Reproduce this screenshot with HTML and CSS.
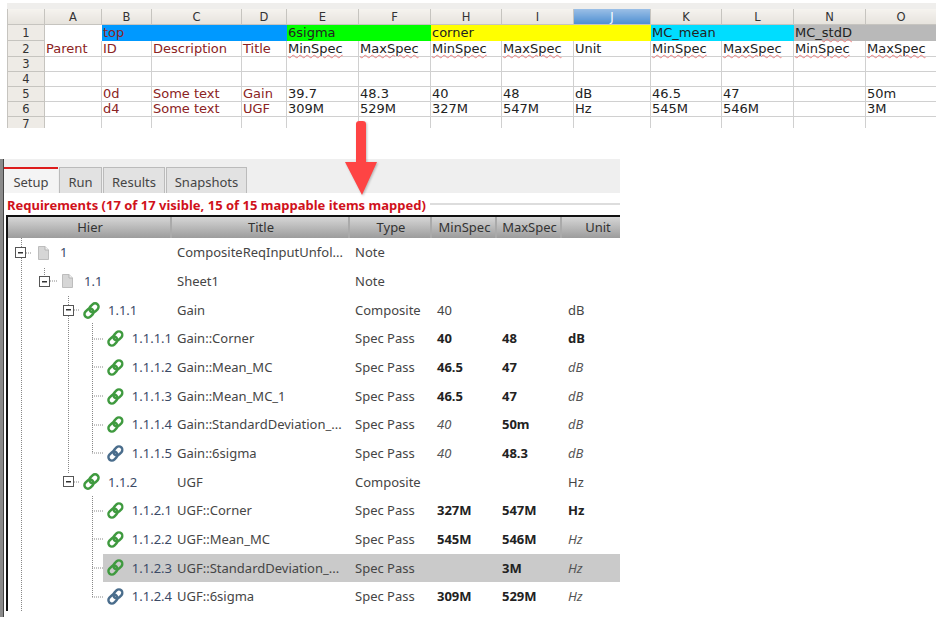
FILE: index.html
```html
<!DOCTYPE html>
<html lang="en">

<head>
    <meta charset="UTF-8">
    <meta name="viewport" content="width=device-width, initial-scale=1.0">
    <title>Requirements</title>
    <link rel="stylesheet" href="styles.css">
</head>

<body>
    <svg class="defs" width="0" height="0">
        <symbol id="link" viewBox="0 0 17 17">
            <rect x="1" y="7.6" width="10" height="7" rx="3.5" transform="rotate(-45 6 11.1)" fill="none" stroke="currentColor" stroke-width="2.5"/>
            <rect x="6" y="2.4" width="10" height="7" rx="3.5" transform="rotate(-45 11 5.9)" fill="none" stroke="currentColor" stroke-width="2.5"/>
        </symbol>
        <symbol id="doc" viewBox="0 0 11 14">
            <path d="M.5.5H7L10.5 4V13.5H.5Z" fill="#d6d6d6" stroke="#bdbdbd"/>
            <path d="M7 .5V4H10.5" fill="#f2f2f2" stroke="#b4b4b4"/>
        </symbol>
    </svg>

    <div class="sheet">
        <table class="grid">
            <colgroup>
                <col class="c-head"><col class="c-a"><col class="c-b"><col class="c-c"><col class="c-d">
                <col class="c-n"><col class="c-n"><col class="c-s"><col class="c-n"><col class="c-j">
                <col class="c-s"><col class="c-n"><col class="c-n"><col class="c-s">
            </colgroup>
            <tr class="col-heads">
                <th></th><th>A</th><th>B</th><th>C</th><th>D</th><th>E</th><th>F</th><th>H</th><th>I</th><th class="picked">J</th><th>K</th><th>L</th><th>N</th><th>O</th>
            </tr>
            <tr class="r1">
                <th>1</th><td></td>
                <td colspan="3" class="blue red">top</td>
                <td colspan="2" class="green">6sigma</td>
                <td colspan="3" class="yellow">corner</td>
                <td colspan="2" class="cyan">MC_mean</td>
                <td colspan="2" class="grey">MC_<span class="spell">stdD</span></td>
            </tr>
            <tr class="r2">
                <th>2</th><td class="red">Parent</td><td class="red">ID</td><td class="red">Description</td><td class="red">Title</td>
                <td><span class="spell">MinSpec</span></td><td><span class="spell">MaxSpec</span></td><td><span class="spell">MinSpec</span></td><td class="dark-l"><span class="spell">MaxSpec</span></td><td>Unit</td>
                <td><span class="spell">MinSpec</span></td><td><span class="spell">MaxSpec</span></td><td><span class="spell">MinSpec</span></td><td><span class="spell">MaxSpec</span></td>
            </tr>
            <tr class="r3">
                <th>3</th><td></td><td></td><td></td><td></td><td></td><td></td><td></td><td class="dark-l"></td><td></td><td></td><td></td><td></td><td></td>
            </tr>
            <tr class="r4">
                <th>4</th><td></td><td></td><td></td><td></td><td></td><td></td><td></td><td class="dark-l"></td><td></td><td></td><td></td><td></td><td></td>
            </tr>
            <tr class="r5">
                <th>5</th><td></td><td class="red">0d</td><td class="red">Some text</td><td class="red">Gain</td>
                <td>39.7</td><td>48.3</td><td>40</td><td class="dark-l">48</td><td>dB</td><td>46.5</td><td>47</td><td></td><td>50m</td>
            </tr>
            <tr class="r6">
                <th>6</th><td></td><td class="red">d4</td><td class="red">Some text</td><td class="red">UGF</td>
                <td>309M</td><td>529M</td><td>327M</td><td class="dark-l">547M</td><td>Hz</td><td>545M</td><td>546M</td><td></td><td>3M</td>
            </tr>
            <tr class="r7">
                <th>7</th><td></td><td></td><td></td><td></td><td></td><td></td><td></td><td class="dark-l"></td><td></td><td></td><td></td><td></td><td></td>
            </tr>
        </table>
    </div>

    <svg class="arrow" width="40" height="80" viewBox="0 0 40 80">
        <path d="M13 4Q13 1 16.5 1H19.5Q23 1 23 4V42H34L19 75L2 42H13Z" fill="#fe4444"/>
    </svg>

    <div class="panel">
        <div class="tabs">
            <div class="tab active">Setup</div>
            <div class="tab t-run">Run</div>
            <div class="tab t-results">Results</div>
            <div class="tab t-snap">Snapshots</div>
        </div>
        <div class="title-row">
            <span class="req-title">Requirements (17 of 17 visible, 15 of 15 mappable items mapped)</span>
            <span class="title-rule"></span>
        </div>
        <div class="tree">
            <div class="tree-head row-cols">
                <div>Hier</div><div>Title</div><div>Type</div><div>MinSpec</div><div>MaxSpec</div><div>Unit</div>
            </div>
            <div class="tree-body">
                <!-- coords: page x - 8, page y - 238 -->
                <svg class="lines" width="612" height="379">
                    <path d="M13.5 0V379M36.5 30V37M60.5 58V235M84.5 85V215M84.5 258V359"/>
                    <path d="M18 15H24M42 43H49M66 72H72M66 244H72M84 101H95M84 129H95M84 158H95M84 187H95M84 215H95M84 273H95M84 301H95M84 330H95M84 359H95"/>
                </svg>
                <div class="row row-cols">
                    <div class="hier lvl1"><span class="box"></span><svg class="doc"><use href="#doc"/></svg><span>1</span></div>
                    <div>CompositeReqInputUnfol...</div><div>Note</div><div></div><div></div><div></div>
                </div>
                <div class="row row-cols">
                    <div class="hier lvl2"><span class="box"></span><svg class="doc"><use href="#doc"/></svg><span>1.1</span></div>
                    <div>Sheet1</div><div>Note</div><div></div><div></div><div></div>
                </div>
                <div class="row row-cols">
                    <div class="hier lvl3"><span class="box"></span><svg class="link"><use href="#link"/></svg><span>1.1.1</span></div>
                    <div>Gain</div><div>Composite</div><div>40</div><div></div><div>dB</div>
                </div>
                <div class="row row-cols">
                    <div class="hier leaf"><svg class="link"><use href="#link"/></svg><span>1.1.1.1</span></div>
                    <div>Gain::Corner</div><div>Spec Pass</div><div class="b">40</div><div class="b">48</div><div class="b">dB</div>
                </div>
                <div class="row row-cols">
                    <div class="hier leaf"><svg class="link"><use href="#link"/></svg><span>1.1.1.2</span></div>
                    <div>Gain::Mean_MC</div><div>Spec Pass</div><div class="b">46.5</div><div class="b">47</div><div class="i">dB</div>
                </div>
                <div class="row row-cols">
                    <div class="hier leaf"><svg class="link"><use href="#link"/></svg><span>1.1.1.3</span></div>
                    <div>Gain::Mean_MC_1</div><div>Spec Pass</div><div class="b">46.5</div><div class="b">47</div><div class="i">dB</div>
                </div>
                <div class="row row-cols">
                    <div class="hier leaf"><svg class="link"><use href="#link"/></svg><span>1.1.1.4</span></div>
                    <div>Gain::StandardDeviation_...</div><div>Spec Pass</div><div class="i">40</div><div class="b">50m</div><div class="i">dB</div>
                </div>
                <div class="row row-cols">
                    <div class="hier leaf"><svg class="link slate"><use href="#link"/></svg><span>1.1.1.5</span></div>
                    <div>Gain::6sigma</div><div>Spec Pass</div><div class="i">40</div><div class="b">48.3</div><div class="i">dB</div>
                </div>
                <div class="row row-cols">
                    <div class="hier lvl3"><span class="box"></span><svg class="link"><use href="#link"/></svg><span>1.1.2</span></div>
                    <div>UGF</div><div>Composite</div><div></div><div></div><div>Hz</div>
                </div>
                <div class="row row-cols">
                    <div class="hier leaf"><svg class="link"><use href="#link"/></svg><span>1.1.2.1</span></div>
                    <div>UGF::Corner</div><div>Spec Pass</div><div class="b">327M</div><div class="b">547M</div><div class="b">Hz</div>
                </div>
                <div class="row row-cols">
                    <div class="hier leaf"><svg class="link"><use href="#link"/></svg><span>1.1.2.2</span></div>
                    <div>UGF::Mean_MC</div><div>Spec Pass</div><div class="b">545M</div><div class="b">546M</div><div class="i">Hz</div>
                </div>
                <div class="row row-cols selected">
                    <div class="hier leaf"><svg class="link"><use href="#link"/></svg><span>1.1.2.3</span></div>
                    <div>UGF::StandardDeviation_...</div><div>Spec Pass</div><div></div><div class="b">3M</div><div class="i">Hz</div>
                </div>
                <div class="row row-cols">
                    <div class="hier leaf"><svg class="link slate"><use href="#link"/></svg><span>1.1.2.4</span></div>
                    <div>UGF::6sigma</div><div>Spec Pass</div><div class="b">309M</div><div class="b">529M</div><div class="i">Hz</div>
                </div>
            </div>
        </div>
    </div>
</body>

</html>
```
FILE: styles.css
```css
/* General */
html,
body {
    margin: 0;
    padding: 0;
    height: 617px;
    overflow: hidden;
    background-color: #fff;
}

.defs {
    display: block;
    height: 0;
}

/* Spreadsheet */
.sheet {
    margin-left: 7px;
    padding-top: 3px;
    height: 125px;
    overflow: hidden;
}

.grid {
    table-layout: fixed;
    width: 929px;
    border-collapse: collapse;
    border-top: 6px solid #efeeec;
    font-family: "DejaVu Sans", sans-serif;
    font-size: 13px;
    color: #222;
}

.c-head { width: 37px; }
.c-a { width: 57px; }
.c-b { width: 50px; }
.c-c { width: 90px; }
.c-d { width: 45px; }
.c-n { width: 72px; }
.c-s { width: 71px; }
.c-j { width: 77px; }

.grid th {
    background: #eeebe6;
    border: 1px solid #c6c4bf;
    font-weight: normal;
    font-size: 11.5px;
    color: #333;
    padding: 0;
    text-align: center;
}

.grid td {
    border: 1px solid #d0d0d0;
    padding: 0 0 0 1px;
    white-space: nowrap;
    overflow: hidden;
    vertical-align: middle;
    line-height: 14px;
}

.grid .dark-l {
    border-left-color: #a8a8a8;
}

.col-heads th {
    height: 15px;
    background: linear-gradient(#f5f3ef, #e6e3dd);
}

.grid .picked {
    background: linear-gradient(#9bbfe6, #4f8fd2);
    color: #fff;
}

.r1 { height: 16px; }
.r2 { height: 16px; }
.r3, .r4, .r5, .r6, .r7 { height: 15px; }

.grid .r1 td,
.grid .r2 td {
    line-height: 15px;
    overflow: visible;
}

.r1 td {
    border-color: transparent;
}

.grid .red { color: #8b2323; }
.blue { background: #0099ff; }
.green { background: #00ff00; }
.yellow { background: #ffff00; }
.cyan { background: #00ddff; }
.grey { background: #b9b9b9; }

.spell {
    text-decoration: underline wavy #ee7f7f 1px;
    text-underline-offset: 1px;
}

/* Arrow over the panel */
.arrow {
    position: absolute;
    left: 343px;
    top: 120px;
    z-index: 5;
    filter: drop-shadow(1px 1px 1px rgba(0, 0, 0, .25));
}

/* Lower panel */
.panel {
    margin-top: 31px;
    height: 458px;
    width: 616px;
    padding-left: 4px;
    background: linear-gradient(90deg, #8a8a8a 0, #8a8a8a 3px, #444 3px, #444 4px, #fff 4px);
    font-family: "Noto Sans", sans-serif;
    font-size: 13px;
    color: #454545;
}

.tabs {
    display: flex;
    height: 26px;
    padding-top: 8px;
    background: #efefef;
}

.tab {
    box-sizing: border-box;
    height: 26px;
    margin-right: 1px;
    background: #e2e2e2;
    border: 1px solid #bbb;
    border-bottom: 0;
    text-align: center;
    line-height: 29px;
    font-size: 13px;
}

.tab.active {
    width: 54px;
    background: #f4f4f4;
    border: 0;
    border-top: 2px solid #dd1c1c;
    line-height: 27px;
}

.t-run { width: 43px; }
.t-results { width: 62px; }
.t-snap { width: 81px; }

.title-row {
    display: flex;
    align-items: center;
    gap: 4px;
    height: 22px;
    padding: 0 0 0 3px;
}

.req-title {
    padding-top: 2px;
    font-weight: bold;
    font-size: 13px;
    color: #d0111b;
    white-space: nowrap;
}

.title-rule {
    flex: 1;
    height: 2px;
    background: #ddd;
}

.tree {
    margin-left: 2px;
    border-left: 2px solid #111;
    border-top: 2px solid #111;
    overflow: hidden;
}

.row-cols {
    display: grid;
    grid-template-columns: 164px 178px 82px 65px 65px 72px;
}

.tree-head {
    height: 21.4px;
    background: linear-gradient(#d6d6d6, #9c9c9c);
    text-align: center;
    line-height: 21px;
    color: #333;
}

.tree-head div {
    padding-left: 2px;
    border-right: 2px solid #aaa;
}

.tree-body {
    position: relative;
}

.lines {
    position: absolute;
    left: 0;
    top: 0;
}

.lines path {
    fill: none;
    stroke: #888;
    stroke-dasharray: 1 1;
}

.row {
    position: relative;
    height: 28.67px;
    line-height: 28.67px;
    white-space: nowrap;
}

.row > div {
    padding-left: 5px;
}

.row > div:nth-child(6) {
    padding-left: 6px;
}

.row > .hier {
    display: flex;
    align-items: center;
    color: #3b4a66;
}

.row > .lvl1 { padding-left: 7px; }
.row > .lvl2 { padding-left: 31px; }
.row > .lvl3 { padding-left: 55px; }
.row > .leaf { padding-left: 99px; }

.box {
    box-sizing: border-box;
    width: 11px;
    height: 11px;
    border: 1px solid #555;
    background: linear-gradient(#333, #333) center / 5px 1.5px no-repeat #fff;
}

.doc {
    width: 11px;
    height: 14px;
    margin: 0 11px 0 12px;
}

.link {
    width: 17px;
    height: 17px;
    margin-right: 8px;
    color: #3f9a3f;
}

.lvl3 .link {
    margin-left: 9px;
}

.link.slate {
    color: #4a6d8c;
}

.b {
    font-weight: bold;
    color: #222;
}

.i {
    font-style: italic;
    color: #555;
}

.selected {
    background: linear-gradient(90deg, transparent 95px, #cacaca 95px);
}
```
